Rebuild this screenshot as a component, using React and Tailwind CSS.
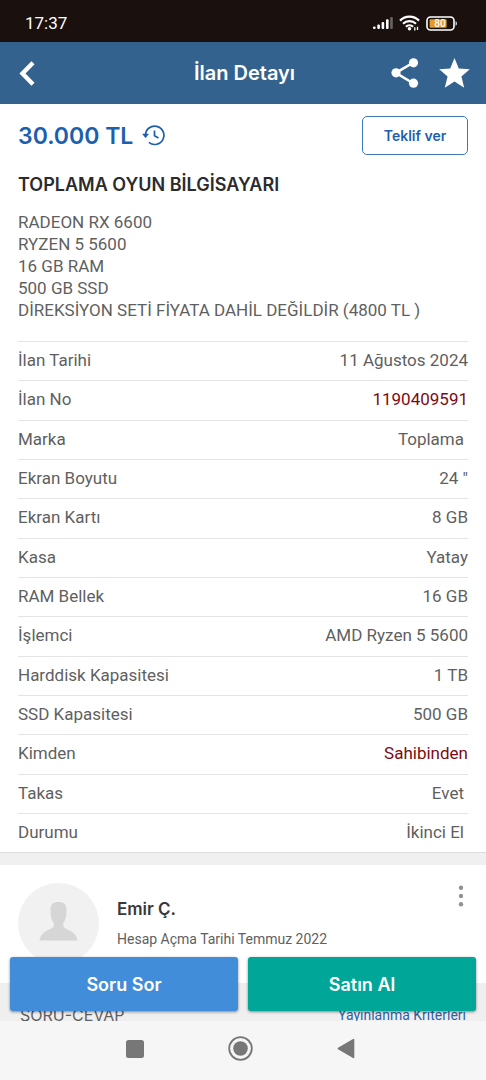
const details = [
  { label: 'İlan Tarihi', value: '11 Ağustos 2024' },
  { label: 'İlan No', value: '1190409591', highlight: true },
  { label: 'Marka', value: 'Toplama', indent: true },
  { label: 'Ekran Boyutu', value: '24 "' },
  { label: 'Ekran Kartı', value: '8 GB' },
  { label: 'Kasa', value: 'Yatay' },
  { label: 'RAM Bellek', value: '16 GB' },
  { label: 'İşlemci', value: 'AMD Ryzen 5 5600' },
  { label: 'Harddisk Kapasitesi', value: '1 TB' },
  { label: 'SSD Kapasitesi', value: '500 GB' },
  { label: 'Kimden', value: 'Sahibinden', highlight: true },
  { label: 'Takas', value: 'Evet', indent: true },
  { label: 'Durumu', value: 'İkinci El', indent: true },
];

const description = [
  'RADEON RX 6600',
  'RYZEN 5 5600',
  '16 GB RAM',
  '500 GB SSD',
  'DİREKSİYON SETİ FİYATA DAHİL DEĞİLDİR (4800 TL )',
];

function StatusBar() {
  return (
    <div className="flex h-[42px] shrink-0 items-center justify-between bg-[#1a100e] pt-1 pr-[28px] pl-[25px] text-white">
      <span className="font-['Roboto',sans-serif] text-[17px] leading-5">17:37</span>
      <div className="flex items-center gap-[6px]">
        {/* Signal */}
        <svg width="20" height="14" viewBox="0 0 20 14" fill="#fff">
          <rect x="0" y="10.500" width="2.600" height="2.500" rx="1" />
          <rect x="4.3" y="8.5" width="2.600" height="4.5" rx="1" />
          <rect x="8.600" y="6" width="2.600" height="7" rx="1" />
          <rect x="13" y="3.2" width="2.600" height="9.8" rx="1" />
          <rect x="17.200" y="1" width="2.600" height="12" rx="1" fill="#6b6361" />
        </svg>
        {/* Wifi */}
        <svg width="21" height="16" viewBox="0 0 21 16" fill="none" stroke="#fff" strokeWidth="2.2">
          <path d="M1 5.6a13.4 13.4 0 0 1 19 0" />
          <path d="M4 8.8a9.2 9.2 0 0 1 13 0" />
          <path d="M6.9 11.7a5.2 5.2 0 0 1 7.2 0" />
          <circle cx="10.5" cy="13.8" r="1.8" fill="#fff" stroke="none" />
          <path d="M15.8 15.5v-3.2M18.5 11.8V15" strokeWidth="1.3" />
        </svg>
        {/* Battery */}
        <svg width="32" height="15" viewBox="0 0 32 15">
          <rect x="1" y="1" width="27" height="13" rx="3.5" fill="none" stroke="#fff" strokeWidth="1.6" />
          <rect x="3.6" y="3.2" width="17" height="8.6" rx="1.2" fill="#e39a27" />
          <path d="M29.6 5.2c1.6.5 1.6 4.1 0 4.6z" fill="#fff" />
          <text x="14" y="11" textAnchor="middle" fontSize="10" fontWeight="500" fontFamily="Roboto, sans-serif" fill="#fff">80</text>
        </svg>
      </div>
    </div>
  );
}

function Header() {
  return (
    <header className="grid h-[62px] shrink-0 grid-cols-[1fr_auto_1fr] items-center bg-[#33628f] pr-4 pl-[19px] text-white">
      <button type="button" aria-label="Geri" className="justify-self-start">
        <svg width="17" height="25" viewBox="0 0 17 25" fill="none" stroke="#fff" strokeWidth="4.4">
          <path d="M14 1.8 3.5 12.5 14 23.2" />
        </svg>
      </button>
      <h1 className="text-[20px] leading-6 font-semibold">İlan Detayı</h1>
      <div className="flex items-center justify-self-end gap-5">
        <button type="button" aria-label="Paylaş">
          <svg width="28" height="30" viewBox="0 0 28 30" fill="#fff">
            <path d="M22.5 4.5 4.8 14.8 22.5 25.5" fill="none" stroke="#fff" strokeWidth="2.6" />
            <circle cx="22.5" cy="4.8" r="4.6" />
            <circle cx="5" cy="14.8" r="4.6" />
            <circle cx="22.5" cy="25.2" r="4.6" />
          </svg>
        </button>
        <button type="button" aria-label="Favorilere ekle">
          <svg width="31" height="30" viewBox="0 0 31 30" fill="#fff">
            <path d="M15.5 0 19.8 10.4l11 .8-8.400 7.300 2.800 11.300-9.700-6.200-9.700 6.200 2.800-11.300L.2 11.200l11-.8z" />
          </svg>
        </button>
      </div>
    </header>
  );
}

function DetailTable() {
  return (
    <table className="h-[511px] w-full border-t border-[#e4e4e4] font-['Roboto',sans-serif] text-[17px] leading-5 text-[#5f5f5f]">
      <tbody>
        {details.map((row) => (
          <tr key={row.label} className="border-b border-[#e4e4e4] last:border-0">
            <th scope="row" className="pb-[2px] text-left font-normal">{row.label}</th>
            <td className={`pb-[2px] text-right ${row.indent ? 'pr-1' : ''} ${row.highlight ? 'text-[#7d0a12]' : ''}`}>
              {row.value}
            </td>
          </tr>
        ))}
      </tbody>
    </table>
  );
}

function Seller() {
  return (
    <section className="flex items-start bg-white px-[18px] pt-[18px] pb-[19px]">
      <svg className="shrink-0" width="81" height="81" viewBox="0 0 81 81">
        <circle cx="40.5" cy="40.5" r="40.5" fill="#f1f1f1" />
        <path
          d="M40.5 19c5.500 0 8 2.500 8 7.500 0 6-.7 10.500-3.200 13.500-.5 3.500.5 4.700 3.500 6 5.500 2.300 9.700 5.500 10.700 11.500H21.500c1-6 5.200-9.200 10.700-11.500 3-1.300 4-2.500 3.500-6-2.500-3-3.200-7.500-3.200-13.500 0-5 2.500-7.500 8-7.500z"
          fill="#d6d6d6"
        />
      </svg>
      <div className="ml-[18px] flex-1 pt-[14px]">
        <h2 className="text-[17px] leading-6 font-semibold text-[#38383a]">Emir Ç.</h2>
        <p className="mt-2 font-['Roboto',sans-serif] text-[14px] leading-5 text-[#5f5f5f]">Hesap Açma Tarihi Temmuz 2022</p>
      </div>
      <button type="button" aria-label="Diğer seçenekler" className="pt-[2px]">
        <svg width="14" height="22" viewBox="0 0 14 22" fill="#929292">
          <circle cx="7" cy="2.7" r="2.2" />
          <circle cx="7" cy="11" r="2.2" />
          <circle cx="7" cy="19.2" r="2.2" />
        </svg>
      </button>
    </section>
  );
}

function NavBar() {
  return (
    <nav className="flex h-[59px] shrink-0 items-center justify-center gap-[84px] bg-[#f6f6f6] pr-[5px] pb-1">
      <button type="button" aria-label="Son uygulamalar">
        <svg width="18" height="18" viewBox="0 0 18 18">
          <rect width="18" height="18" rx="2.5" fill="#777" />
        </svg>
      </button>
      <button type="button" aria-label="Ana ekran">
        <svg width="25" height="25" viewBox="0 0 25 25">
          <circle cx="12.5" cy="12.5" r="11.3" fill="none" stroke="#777" strokeWidth="1.8" />
          <circle cx="12.5" cy="12.5" r="7.3" fill="#777" />
        </svg>
      </button>
      <button type="button" aria-label="Geri dön">
        <svg width="18" height="21" viewBox="0 0 18 21">
          <path d="M16 1 1 9.8q-1 .7 0 1.4L16 20q1.300.6 1.300-.8V1.800Q17.300.4 16 1z" fill="#777" />
        </svg>
      </button>
    </nav>
  );
}

export default function App() {
  return (
    <div className="flex h-screen flex-col bg-white font-['Inter',sans-serif]">
      <StatusBar />
      <Header />
      <div className="relative min-h-0 flex-1 overflow-hidden">
        <main>
          <section className="px-[18px] pt-3">
            <div className="flex items-center justify-between">
              <div className="flex items-center gap-[9px] text-[#1c5faf]">
                <p className="text-[23px] leading-8 font-semibold">30.000 TL</p>
                <svg width="23" height="21" viewBox="0 0 23 21" fill="none" stroke="currentColor" strokeWidth="1.7">
                  <path d="M3.5 11.5V10.2a9.2 9.2 0 1 1 3.4 7.2" />
                  <path d="M0 8.8h7L3.6 13z" fill="currentColor" stroke="none" />
                  <path d="M12.5 5.5v5.3l4 2.2" />
                </svg>
              </div>
              <button type="button" className="h-[39px] min-w-[106px] rounded-[5px] border border-[#3f78b5] px-4 text-[14px] font-semibold text-[#1c5faf]">
                Teklif ver
              </button>
            </div>
            <h2 className="mt-[18px] text-[18px] leading-6 font-semibold text-[#2b2b2d]">TOPLAMA OYUN BİLGİSAYARI</h2>
            <div className="mt-[14px] mb-5 font-['Roboto',sans-serif] text-[17px] leading-[22px] text-[#5f5f5f]">
              {description.map((line) => (
                <p key={line}>{line}</p>
              ))}
            </div>
            <DetailTable />
          </section>
          <div className="h-[13px] border-t border-[#dedede] bg-[#f0f0f0]" />
          <Seller />
          <section className="flex items-center justify-between bg-[#efefef] px-5 pt-[22px] pb-4">
            <h2 className="text-[16px] leading-5 text-[#5f5f5f]">SORU-CEVAP</h2>
            <a href="#kriterler" className="font-['Roboto',sans-serif] text-[14px] leading-5 text-[#2c61a5]">Yayınlanma Kriterleri</a>
          </section>
        </main>
        <div className="absolute inset-x-[10px] bottom-[10px] grid grid-cols-2 gap-[10px] text-[18px] font-semibold text-white">
          <button type="button" className="h-[54px] rounded-[3px] bg-[#428dd9] shadow-[0_1px_3px_rgba(0,0,0,0.45)]">Soru Sor</button>
          <button type="button" className="h-[54px] rounded-[3px] bg-[#00a698] shadow-[0_1px_3px_rgba(0,0,0,0.45)]">Satın Al</button>
        </div>
      </div>
      <NavBar />
    </div>
  );
}
